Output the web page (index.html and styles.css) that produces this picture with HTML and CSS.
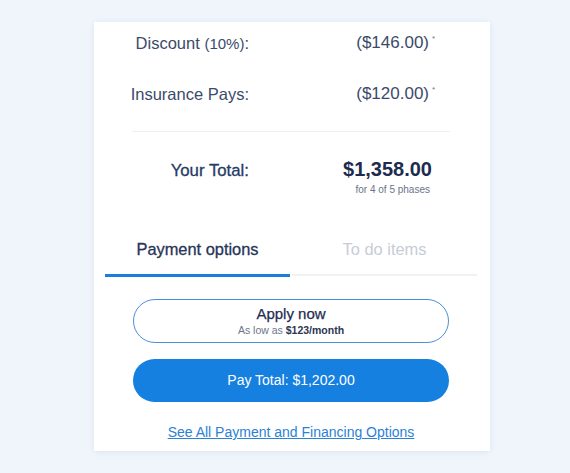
FILE: index.html
```html
<!DOCTYPE html>
<html>
<head>
<meta charset="utf-8">
<link rel="stylesheet" href="styles.css">
</head>
<body>
<div class="card">
  <div class="summary">
    <div class="rows">
      <div class="label">Discount <span class="small">(10%)</span>:</div>
      <div class="value">($146.00)<span class="ast">*</span></div>
      <div class="label">Insurance Pays:</div>
      <div class="value">($120.00)<span class="ast">*</span></div>
    </div>
    <div class="divider"></div>
    <div class="total">
      <div class="total-label">Your Total:</div>
      <div class="total-value">
        <div class="amount">$1,358.00</div>
        <div class="phases">for 4 of 5 phases</div>
      </div>
    </div>
  </div>
  <div class="tabs">
    <div class="tab active">Payment options</div>
    <div class="tab">To do items</div>
  </div>
  <div class="actions">
    <button class="btn btn-outline">
      <span class="btn-title">Apply now</span>
      <span class="btn-sub">As low as <b>$123/month</b></span>
    </button>
    <button class="btn btn-primary">Pay Total: $1,202.00</button>
    <a class="link" href="#">See All Payment and Financing Options</a>
  </div>
</div>
</body>
</html>
```
FILE: styles.css
```css
* { box-sizing: border-box; }
html, body {
  margin: 0;
  padding: 0;
  background: #f0f5fc;
  font-family: "Liberation Sans", Arial, sans-serif;
}
body {
  padding-top: 22px;
  width: 570px;
  height: 473px;
  overflow: hidden;
}
.card {
  margin-left: 94px;
  width: 396px;
  height: 429px;
  background: #ffffff;
  box-shadow: 0 1px 6px rgba(40, 70, 130, 0.10);
  padding-top: 11px;
}
.summary {
  margin: 0 40px 0 38px;
}
.rows {
  display: grid;
  grid-template-columns: 117px 1fr;
  row-gap: 30px;
  padding-right: 18px;
  color: #3c4a6a;
  font-size: 16.5px;
  line-height: 20px;
}
.label {
  justify-self: end;
  white-space: nowrap;
}
.label .small { font-size: 15px; }
.value {
  justify-self: end;
  font-size: 17px;
  white-space: nowrap;
}
.ast {
  display: inline-block;
  width: 0;
  font-size: 8px;
  vertical-align: top;
  line-height: 12px;
  padding-left: 3px;
  color: #6a7489;
}
.divider {
  height: 1px;
  background: #eceef1;
  margin-top: 27px;
}
.total {
  display: grid;
  grid-template-columns: 117px 1fr;
  padding-right: 18px;
  margin-top: 25px;
}
.total-label {
  justify-self: end;
  white-space: nowrap;
  color: #263a66;
  font-size: 16.8px;
  line-height: 24px;
  padding-top: 2px;
  -webkit-text-stroke: 0.3px #263a66;
}
.total-value {
  justify-self: end;
  text-align: right;
}
.amount {
  font-size: 20px;
  font-weight: bold;
  line-height: 24px;
  color: #1d2b4f;
}
.phases {
  font-size: 10px;
  line-height: 14px;
  margin-top: 2px;
  color: #6a7489;
  padding-right: 2px;
}
.tabs {
  display: grid;
  grid-template-columns: 1fr 1fr;
  column-gap: 2px;
  align-items: start;
  margin: 42px 13px 0 11px;
}
.tab {
  text-align: center;
  font-size: 16.4px;
  line-height: 20px;
  padding-bottom: 15px;
  color: #c7ccd6;
  border-bottom: 2px solid #f0f1f3;
}
.tab.active {
  color: #263559;
  border-bottom: 3px solid #1a7fdc;
  -webkit-text-stroke: 0.3px #263559;
}
.actions {
  display: flex;
  flex-direction: column;
  align-items: center;
  margin: 22px 41px 0 39px;
}
.btn {
  width: 100%;
  border-radius: 23px;
  font-family: "Liberation Sans", Arial, sans-serif;
  cursor: pointer;
  display: flex;
  flex-direction: column;
  align-items: center;
  justify-content: center;
}
.btn-outline {
  height: 44px;
  background: #ffffff;
  border: 1.5px solid #4b8fd7;
}
.btn-title {
  font-size: 15px;
  line-height: 18px;
  color: #1f2d52;
  -webkit-text-stroke: 0.25px #1f2d52;
}
.btn-sub {
  font-size: 10.5px;
  line-height: 13px;
  margin-top: 1px;
  color: #6d7588;
}
.btn-sub b { color: #2b3552; }
.btn-primary {
  margin-top: 16px;
  height: 43px;
  background: #1580e0;
  border: none;
  color: #ffffff;
  font-size: 14px;
  line-height: 17px;
}
.link {
  margin-top: 22px;
  font-size: 14px;
  line-height: 17px;
  color: #2b82d5;
  text-decoration: underline;
}
```
